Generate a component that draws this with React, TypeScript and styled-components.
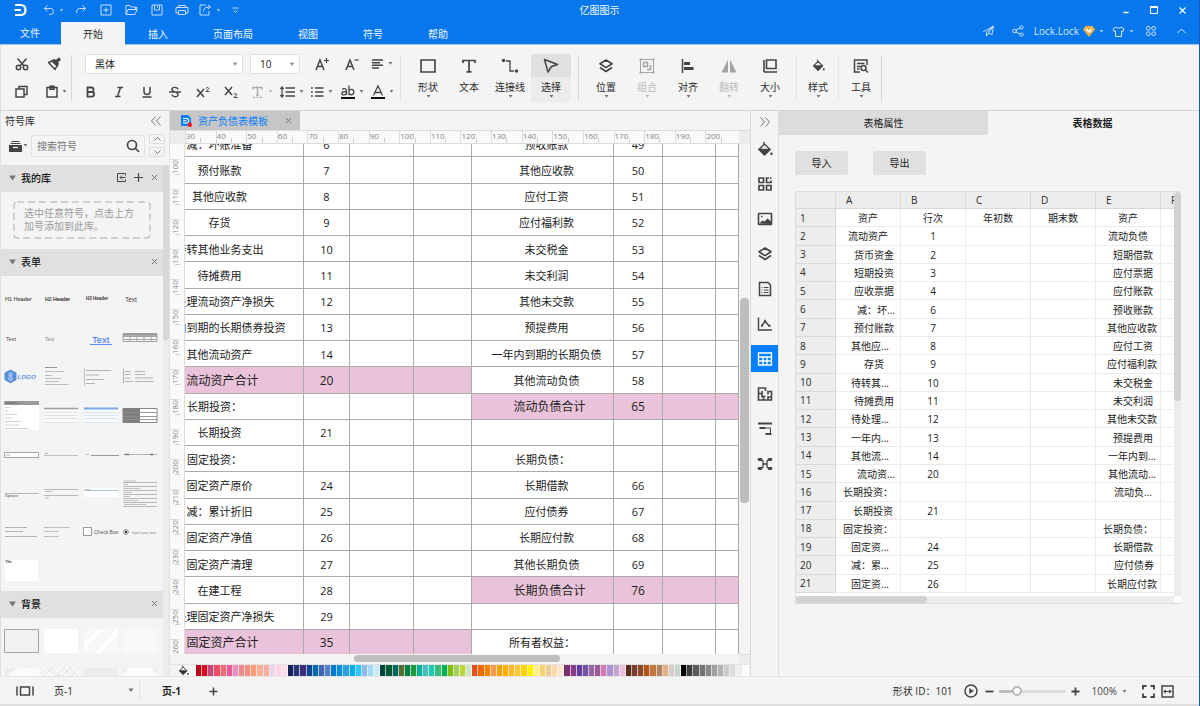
import React from 'react';
import styled, { createGlobalStyle, css } from 'styled-components';

const Global = createGlobalStyle`
  *, *::before, *::after { box-sizing: border-box; }
  html, body { margin: 0; padding: 0; }
  body, button, input, select, table {
    font-family: "Open Sans", "Noto Sans CJK SC", sans-serif;
    font-size: 10px;
    line-height: 16px;
    color: #2b2b2b;
  }
  button {
    border: 0;
    padding: 0;
    background: none;
    display: flex;
    align-items: center;
    justify-content: center;
    flex: none;
  }
  svg { display: block; flex: none; }
`;

/* ---------- icon helper ---------- */

type IconProps = {
  w?: number;
  h?: number;
  box?: string;
  sw?: number;
  fill?: string;
  children: React.ReactNode;
};

const Icon = ({ w = 16, h = w, box, sw = 1.5, fill = 'none', children }: IconProps) => (
  <svg
    width={w}
    height={h}
    viewBox={box || `0 0 ${w} ${h}`}
    fill={fill}
    stroke="currentColor"
    strokeWidth={sw}
    aria-hidden="true"
  >
    {children}
  </svg>
);

const Caret = ({ size = 5 }: { size?: number }) => (
  <svg width={size} height={size === 5 ? 3 : 5} viewBox="0 0 6 4" fill="currentColor" opacity={0.75} aria-hidden="true">
    <path d="M.5 0h5L3 3.500z" />
  </svg>
);

const CloseX = () => (
  <Icon w={7} sw={1}>
    <path d="M1 1l5 5M6 1L1 6" stroke="#777" />
  </Icon>
);

/* ---------- frame ---------- */

const Frame = styled.div`
  height: 100vh;
  display: flex;
  flex-direction: column;
  background: #f4f4f4;
  border-right: 1px solid #1a5cb8;
  overflow: hidden;
`;

const Header = styled.header`
  flex: none;
  background: #0977ec;
  color: #d9eafd;
  border-bottom: 1px solid #a9c4e2;
`;

const TitleBar = styled.div`
  display: grid;
  grid-template-columns: 1fr auto 1fr;
  align-items: center;
  height: 22px;
  padding-bottom: 2px;
`;

const QuickTools = styled.div`
  display: flex;
  align-items: center;
  padding-left: 12px;
`;

const QuickButton = styled.button<{ $w?: number }>`
  width: ${(p) => p.$w || 25}px;
  height: 20px;
  gap: 4px;
  color: #c4defb;
`;

const AppTitle = styled.h1`
  margin: 0;
  font-size: 10px;
  font-weight: 400;
  color: #f2f8ff;
`;

const WindowButtons = styled.div`
  display: flex;
  justify-content: flex-end;
  padding-right: 3px;
`;

const WindowButton = styled.button`
  width: 28px;
  height: 18px;
  color: #ffffff;
`;

const MenuRow = styled.div`
  display: flex;
  justify-content: space-between;
  height: 22px;
`;

const MenuTabs = styled.nav`
  display: flex;
  gap: 1px;
`;

const MenuTab = styled.button<{ $active?: boolean; $file?: boolean }>`
  height: 23px;
  padding: ${(p) => (p.$file ? '0 20px 2px' : '0 22px')};
  color: ${(p) => (p.$active ? '#2b2b2b' : '#eef6ff')};
  background: ${(p) => (p.$active ? '#f4f4f4' : 'transparent')};
  border-radius: 1px 1px 0 0;
`;

const Account = styled.div`
  display: flex;
  align-items: center;
  padding: 0 5px 4px 0;
`;

const AccountButton = styled.button<{ $w?: number }>`
  width: ${(p) => (p.$w ? p.$w + 'px' : 'auto')};
  gap: 4px;
  color: #d4e7fd;
`;

/* ---------- ribbon ---------- */

const Ribbon = styled.div`
  flex: none;
  height: 65px;
  display: flex;
  align-items: center;
  border-left: 1px solid #e0e0e0;
  color: #444444;
`;

const Divider = styled.div<{ $soft?: boolean }>`
  width: 1px;
  height: 46px;
  flex: none;
  background: ${(p) => (p.$soft ? '#e4e4e4' : '#d6d6d6')};
`;

const ToolStack = styled.div<{ $pad: string }>`
  display: flex;
  flex-direction: column;
  gap: 6px;
  padding: ${(p) => p.$pad};
`;

const ToolRow = styled.div<{ $pad?: number }>`
  display: flex;
  align-items: center;
  height: 22px;
  padding-left: ${(p) => p.$pad || 0}px;
`;

const Tool = styled.button<{ $w: number; $muted?: boolean }>`
  width: ${(p) => p.$w}px;
  height: 22px;
  gap: 4px;
  color: ${(p) => (p.$muted ? '#a8a8a8' : '#444444')};
`;

const Spacer = styled.div<{ $w: number }>`
  width: ${(p) => p.$w}px;
  flex: none;
`;

const SelectBox = styled.label<{ $w: number }>`
  position: relative;
  display: flex;
  width: ${(p) => p.$w}px;
  height: 20px;
  border: 1px solid #e0e0e0;
  border-radius: 1px;
  background: #ffffff;
  color: #777777;
  > svg {
    position: absolute;
    right: 4px;
    top: 7px;
    pointer-events: none;
  }
`;

const Select = styled.select`
  appearance: none;
  width: 100%;
  border: 0;
  padding: 0 9px;
  background: none;
  color: #222222;
`;

const BigGroup = styled.div<{ $pad: string }>`
  display: flex;
  gap: 1px;
  padding: ${(p) => p.$pad};
`;

const BigButton = styled.button<{ $active?: boolean; $muted?: boolean }>`
  width: 40px;
  height: 48px;
  flex-direction: column;
  justify-content: flex-start;
  color: ${(p) => (p.$muted ? '#a4a4a4' : '#444444')};
  ${(p) =>
    p.$active &&
    css`
      border-radius: 2px;
      background: linear-gradient(#e0e0e0 23px, #ececec 23px);
    `}
`;

const BigIcon = styled.span`
  display: flex;
  align-items: center;
  height: 24px;
`;

const BigLabel = styled.span<{ $muted?: boolean }>`
  height: 17px;
  line-height: 19px;
  color: ${(p) => (p.$muted ? '#bdbdbd' : '#2b2b2b')};
`;

/* ---------- body ---------- */

const Body = styled.main`
  flex: 1;
  min-height: 0;
  display: flex;
  border-top: 1px solid #d4d4d4;
`;

const Library = styled.aside`
  flex: none;
  width: 170px;
  display: flex;
  flex-direction: column;
  border-left: 1px solid #e0e0e0;
  border-right: 1px solid #e0e0e0;
  overflow: hidden;
`;

const LibraryHead = styled.div`
  flex: none;
  display: flex;
  align-items: center;
  justify-content: space-between;
  height: 20px;
  padding: 0 7px 0 4px;
`;

const LibraryTitle = styled.h2`
  margin: 0;
  font-size: 10px;
  font-weight: 400;
`;

const SearchRow = styled.div`
  flex: none;
  display: flex;
  align-items: center;
  height: 34px;
  padding: 3px 4px 8px 8px;
  color: #444444;
`;

const SearchBox = styled.label`
  flex: 1;
  min-width: 0;
  display: flex;
  align-items: center;
  height: 22px;
  margin: 0 4px 0 3px;
  padding-right: 4px;
  border: 1px solid #e2e2e2;
  border-radius: 2px;
`;

const SearchInput = styled.input`
  flex: 1;
  min-width: 0;
  border: 0;
  padding: 0 5px;
  background: none;
  &::placeholder { color: #777777; opacity: 1; }
`;

const Steppers = styled.div`
  display: flex;
  flex-direction: column;
  gap: 3px;
`;

const Stepper = styled.button`
  width: 16px;
  height: 10px;
  border: 1px solid #dcdcdc;
  border-radius: 2px;
  color: #777777;
`;

const LibraryScroll = styled.div`
  flex: 1;
  min-height: 0;
  display: grid;
  grid-template-columns: 1fr 6px;
`;

const LibraryList = styled.div`
  min-height: 0;
  overflow: hidden;
`;

const SectionHead = styled.div`
  display: flex;
  align-items: center;
  height: 27px;
  padding: 0 5px 2px 8px;
  gap: 5px;
  background: #e0e0e0;
  color: #777777;
`;

const SectionTitle = styled.h3`
  flex: 1;
  margin: 0;
  font-size: 10px;
  font-weight: 500;
  color: #111111;
`;

const SectionTools = styled.div`
  display: flex;
  gap: 8px;
  align-items: center;
  color: #444444;
`;

const EmptyHint = styled.p`
  display: flex;
  align-items: center;
  position: relative;
  height: 38px;
  margin: 9px 12px 10px;
  padding: 0 10px 0 11px;
  line-height: 13px;
  color: #9b9b9b;
  > svg { position: absolute; inset: 0; width: 100%; height: 100%; }
`;

const Thumbs = styled.div`
  display: grid;
  grid-template-columns: repeat(4, 1fr);
  grid-auto-rows: 39px;
  justify-items: center;
  padding: 3px 3px 0 1px;
`;

const Track = styled.div`
  background: #ececec;
`;

const Thumb = styled.div<{ $len: number; $offset?: number; $wide?: boolean; $tone?: string }>`
  border-radius: 4px;
  background: ${(p) => p.$tone || '#bdbdbd'};
  ${(p) =>
    p.$wide
      ? css`
          width: ${p.$len}px;
          height: 100%;
          margin-left: ${p.$offset || 0}px;
        `
      : css`
          height: ${p.$len}px;
          width: 100%;
          margin-top: ${p.$offset || 0}px;
        `}
`;

/* ---------- workspace ---------- */

const Workspace = styled.section`
  flex: 1;
  min-width: 0;
  display: flex;
  flex-direction: column;
`;

const DocTabs = styled.div`
  flex: none;
  display: flex;
  height: 19px;
`;

const DocTab = styled.div`
  display: flex;
  align-items: center;
  width: 130px;
  padding: 0 8px 0 10px;
  gap: 6px;
  background: #c6c6c6;
  color: #777777;
`;

const DocName = styled.span`
  flex: 1;
  color: #0a80f8;
`;

const Stage = styled.div`
  flex: 1;
  min-height: 0;
  display: grid;
  grid-template-columns: 15px minmax(0, 1fr) 11px;
  grid-template-rows: 14px minmax(0, 1fr) 10px;
`;

const Corner = styled.div`
  background: #ececec;
  border-top: 1px solid #dcdcdc;
`;

const RulerX = styled.div`
  display: grid;
  grid-auto-flow: column;
  grid-auto-columns: 1fr;
  padding-right: 3px;
  background: #fafafa;
  border-top: 1px solid #dcdcdc;
  border-bottom: 1px solid #dcdcdc;
  overflow: hidden;
`;

const MarkX = styled.span`
  border-left: 1px solid #dcdcdc;
  font-size: 8px;
  line-height: 10px;
  color: #858585;
  background: linear-gradient(#cfcfcf, #cfcfcf) 50% 100% / 1px 5px no-repeat;
`;

const RulerY = styled.div`
  background: #fafafa;
  border-right: 1px solid #dcdcdc;
  padding-top: 15px;
  overflow: hidden;
`;

const MarkY = styled.span`
  display: flex;
  align-items: center;
  height: 30px;
  writing-mode: vertical-rl;
  transform: rotate(180deg);
  justify-content: flex-end;
  border-bottom: 1px solid #dcdcdc;
  font-size: 8px;
  line-height: 10px;
  color: #858585;
  background: linear-gradient(#cfcfcf, #cfcfcf) 0 50% / 5px 1px no-repeat;
`;

const Page = styled.div`
  background: #ffffff;
  overflow: hidden;
`;

const Sheet = styled.table`
  table-layout: fixed;
  width: calc(100% + 49px);
  height: 525px;
  margin: -13px 0 0 -49px;
  border-collapse: separate;
  border-spacing: 0;
`;

const Cell = styled.td<{ $pink?: boolean; $big?: boolean; $left?: number; $indent?: number }>`
  padding: ${(p) => `2px 0 0 ${p.$left || p.$indent || 0}px`};
  border-right: 1px solid #ababab;
  border-bottom: 1px solid #ababab;
  background: ${(p) => (p.$pink ? '#eac2da' : '#ffffff')};
  color: #222222;
  font-size: ${(p) => (p.$big ? 12 : 11)}px;
  text-align: ${(p) => (p.$left ? 'left' : 'center')};
  white-space: nowrap;
`;

const TrackY = styled.div`
  background: #f4f4f4;
  padding: 0 1px;
`;

const TrackX = styled.div`
  grid-column: 1 / 3;
  background: #f4f4f4;
  padding: 1px 0 2px;
`;

const PaletteRow = styled.div`
  flex: none;
  display: flex;
  align-items: center;
  height: 12px;
  padding: 0 2px 0 8px;
  border-top: 1px solid #e4e4e4;
  color: #333333;
`;

const Swatches = styled.div`
  flex: 1;
  display: flex;
  height: 11px;
  margin-left: 7px;
`;

const Swatch = styled.span`
  flex: 1;
  border-right: 1px solid rgba(255, 255, 255, 0.65);
`;

/* ---------- side rail ---------- */

const Rail = styled.nav`
  flex: none;
  width: 29px;
  display: flex;
  flex-direction: column;
  gap: 8px;
  border-left: 1px solid #dadada;
  border-right: 1px solid #dedede;
`;

const RailToggle = styled.button`
  height: 16px;
  padding-top: 6px;
  color: #777777;
`;

const RailButton = styled.button<{ $active?: boolean }>`
  height: 27px;
  color: ${(p) => (p.$active ? '#ffffff' : '#444444')};
  background: ${(p) => (p.$active ? '#0080ff' : 'transparent')};
`;

/* ---------- data panel ---------- */

const DataPanel = styled.aside`
  flex: none;
  width: 420px;
  display: flex;
  flex-direction: column;
`;

const PanelTabs = styled.div`
  display: flex;
  padding-right: 2px;
`;

const PanelTab = styled.button<{ $active?: boolean }>`
  flex: 1;
  height: 24px;
  border-radius: 0 0 3px 0;
  background: ${(p) => (p.$active ? 'transparent' : '#dcdcdc')};
  font-weight: ${(p) => (p.$active ? 700 : 400)};
  color: #1c1c1c;
`;

const PanelActions = styled.div`
  display: flex;
  gap: 25px;
  padding: 16px;
`;

const ActionButton = styled.button`
  width: 53px;
  height: 24px;
  border-radius: 2px;
  background: #e0e0e0;
  color: #1c1c1c;
`;

const GridBox = styled.div`
  display: grid;
  grid-template-columns: minmax(0, 1fr) 7px;
  margin: 0 18px 0 16px;
  border: 1px solid #dcdcdc;
  border-right: 0;
  background: #ffffff;
`;

const GridView = styled.div`
  overflow: hidden;
  height: 404px;
`;

const DataGrid = styled.table`
  table-layout: fixed;
  width: 430px;
  height: 401px;
  border-collapse: separate;
  border-spacing: 0;
`;

const ColHead = styled.th`
  padding: 0 0 0 10px;
  background: #ededed;
  border-right: 1px solid #d9d9d9;
  border-bottom: 1px solid #d9d9d9;
  font-weight: 400;
  text-align: left;
`;

const RowHead = styled.th`
  padding: 0 0 0 4px;
  background: #ededed;
  border-right: 1px solid #d9d9d9;
  border-bottom: 1px solid #d9d9d9;
  font-weight: 400;
  text-align: left;
`;

const DataCell = styled.td<{ $indent?: number; $left?: boolean }>`
  padding: 1px 0 0 ${(p) => (p.$left ? 7 : p.$indent || 0)}px;
  border-right: 1px solid #ebebeb;
  border-bottom: 1px solid #ebebeb;
  text-align: ${(p) => (p.$left ? 'left' : 'center')};
  white-space: nowrap;
  color: #1c1c1c;
`;

const GridTrackX = styled.div`
  height: 7px;
  background: #ececec;
`;

/* ---------- status bar ---------- */

const Status = styled.footer`
  flex: none;
  display: flex;
  align-items: center;
  justify-content: space-between;
  height: 30px;
  padding: 0 25px 1px 16px;
  border-top: 1px solid #e4e4e4;
  box-shadow: inset 0 -2px #dedede;
  color: #444444;
`;

const StatusGroup = styled.div`
  display: flex;
  align-items: center;
`;

const PageSelect = styled.label`
  position: relative;
  display: flex;
  align-items: center;
  width: 106px;
  height: 18px;
  border-right: 1px solid #e0e0e0;
  > svg { position: absolute; right: 5px; top: 6px; pointer-events: none; }
`;

const PageTab = styled.button`
  width: 63px;
  font-weight: 700;
  color: #222222;
`;

const ShapeId = styled.span`
  color: #2b2b2b;
  margin-right: 11px;
`;

const Zoom = styled.input`
  appearance: none;
  width: 67px;
  height: 10px;
  margin: 0 4px 0 3px;
  background: linear-gradient(90deg, #bdbdbd 18px, #dedede 18px) 0 50% / 100% 3px no-repeat;
  &::-webkit-slider-thumb {
    appearance: none;
    width: 10px;
    height: 10px;
    border: 2px solid #b8b8b8;
    border-radius: 50%;
    background: #ffffff;
  }
`;

const ZoomValue = styled.button`
  gap: 5px;
  margin: 0 14px 0 10px;
  color: #444444;
`;

const StatusButton = styled.button<{ $w?: number }>`
  width: ${(p) => p.$w || 14}px;
  height: 16px;
  color: #444444;
`;

/* ---------- data ---------- */

type SheetRow = {
  a?: string;
  an?: string;
  e?: string;
  en?: string;
  aSum?: boolean;
  eSum?: boolean;
  aLeft?: boolean;
  eLeft?: number;
};

const sheetRows: SheetRow[] = [
  { a: '减：坏账准备', an: '6', e: '预收账款', en: '49' },
  { a: '预付账款', an: '7', e: '其他应收款', en: '50' },
  { a: '其他应收款', an: '8', e: '应付工资', en: '51' },
  { a: '存货', an: '9', e: '应付福利款', en: '52' },
  { a: '待转其他业务支出', an: '10', e: '未交税金', en: '53' },
  { a: '待摊费用', an: '11', e: '未交利润', en: '54' },
  { a: '待处理流动资产净损失', an: '12', e: '其他未交款', en: '55' },
  { a: '一年内到期的长期债券投资', an: '13', e: '预提费用', en: '56' },
  { a: '其他流动资产', an: '14', e: '一年内到期的长期负债', en: '57' },
  { a: '流动资产合计', an: '20', aSum: true, e: '其他流动负债', en: '58' },
  { a: '长期投资：', aLeft: true, e: '流动负债合计', en: '65', eSum: true },
  { a: '长期投资', an: '21' },
  { a: '固定投资：', aLeft: true, e: '长期负债：', eLeft: 43 },
  { a: '固定资产原价', an: '24', e: '长期借款', en: '66' },
  { a: '减：累计折旧', an: '25', e: '应付债券', en: '67' },
  { a: '固定资产净值', an: '26', e: '长期应付款', en: '68' },
  { a: '固定资产清理', an: '27', e: '其他长期负债', en: '69' },
  { a: '在建工程', an: '28', e: '长期负债合计', en: '76', eSum: true },
  { a: '待处理固定资产净损失', an: '29' },
  { a: '固定资产合计', an: '35', aSum: true, e: '所有者权益：', eLeft: 37 },
];

type GridRow = [string, number, string, string, string, string, number];

/* text of A, indent of A, B, C, D, text of E, indent of E; indent -1 keeps the cell left-aligned */
const gridRows: GridRow[] = [
  ['资产', 0, '行次', '年初数', '期末数', '资产', 0],
  ['流动资产', 0, '1', '', '', '流动负债', 0],
  ['货币资金', 12, '2', '', '', '短期借款', 10],
  ['短期投资', 12, '3', '', '', '应付票据', 10],
  ['应收票据', 12, '4', '', '', '应付账款', 10],
  ['减：坏...', 16, '6', '', '', '预收账款', 10],
  ['预付账款', 12, '7', '', '', '其他应收款', 8],
  ['其他应...', 4, '8', '', '', '应付工资', 10],
  ['存货', 12, '9', '', '', '应付福利款', 8],
  ['待转其...', 4, '10', '', '', '未交税金', 10],
  ['待摊费用', 12, '11', '', '', '未交利润', 10],
  ['待处理...', 4, '12', '', '', '其他未交款', 8],
  ['一年内...', 4, '13', '', '', '预提费用', 10],
  ['其他流...', 4, '14', '', '', '一年内到...', 8],
  ['流动资...', 16, '20', '', '', '其他流动...', 8],
  ['长期投资：', -1, '', '', '', '流动负...', 10],
  ['长期投资', 10, '21', '', '', '', 0],
  ['固定投资：', -1, '', '', '', '长期负债：', -1],
  ['固定资...', 4, '24', '', '', '长期借款', 10],
  ['减：累...', 4, '25', '', '', '应付债券', 12],
  ['固定资...', 4, '26', '', '', '长期应付款', 8],
];

const swatches = (
  '#b60818 #dc0822 #c4497c #f04d63 #ee6b75 #e95a9c #e293bd #f08a8a #f08f80 #ff9b7a #f6b196 #f2b1a4 #ead6e8 #ffd4e4 #ffdfe6 ' +
  '#14235a #233670 #3e2a7c #0b4690 #0067a8 #3f66b0 #5580c4 #007ccc #0a8cd8 #2aa2e0 #00aeef #33c2fa #8cbcea #a2d8f2 #cfe9f5 ' +
  '#00443a #005a34 #006460 #55702e #008046 #1b9a3e #00b09a #4cbcc0 #18ccb0 #40b97c #00b050 #84bc10 #a4d060 #bcd63c #cde6c6 ' +
  '#e4501e #f06a00 #f28400 #f49a50 #f0a400 #fdb000 #fdb833 #fcc832 #ffd400 #fff000 #fdf08c #fcd06e #eccd96 #fdd9ac #fde6cc ' +
  '#7a2f72 #843f88 #6340a0 #7452a4 #9566a0 #9e5c92 #d07cb4 #ac94d4 #c6a6cc #eac0dc ' +
  '#5e2a1c #783e30 #8e4a28 #b2541c #c07840 #b48464 #deb284 #d6ccc8 #c8d4cc ' +
  '#000000 #3e3a39 #5a5a5a #727272 #888888 #a0a0a0 #b4b4b4 #cccccc #dcdcdc #eeeeee #ffffff'
).split(' ');

const steps = (from: number, count: number) => Array.from({ length: count }, (_, i) => from + i * 10);

/* ---------- library thumbnails ---------- */

const Art = ({ children }: { children?: React.ReactNode }) => (
  <svg width="36" height="39" viewBox="0 0 36 39" fontFamily="Liberation Sans, sans-serif" aria-hidden="true">
    {children}
  </svg>
);

/* greeked text: one dashed stroke for each [x, y, width] */
const Greek = ({ rows, tone = '#a6a6a6', t = 1 }: { rows: number[][]; tone?: string; t?: number }) => (
  <g stroke={tone} strokeWidth={t} strokeDasharray="5 .3 3 .3" opacity=".75">
    {rows.map(([x, y, w], i) => (
      <path key={i} d={`M${x} ${y}h${w}`} />
    ))}
  </g>
);

const Rules = ({ ys, tone = '#b8b8b8', x = 1, w = 34 }: { ys: number[]; tone?: string; x?: number; w?: number }) => (
  <g stroke={tone} strokeWidth="1">
    {ys.map((y) => (
      <path key={y} d={`M${x} ${y}h${w}`} />
    ))}
  </g>
);

const formThumbs: React.ReactNode[] = [
  <text x="1" y="21.5" fontSize="5.5" fill="#444" stroke="#444" strokeWidth=".1">H1 Header</text>,
  <text x="2" y="22" fontSize="5.2" fill="#444" stroke="#444" strokeWidth=".2">H2 Header</text>,
  <text x="3" y="21" fontSize="4.5" fontWeight="700" fill="#333">H3 Header</text>,
  <text x="3" y="22.5" fontSize="6.5" fill="#444">Text</text>,

  <text x="2" y="22.500" fontSize="5.5" fill="#444">Text</text>,
  <text x="2" y="22.500" fontSize="5" fill="#888">Text</text>,
  <g>
    <text x="9" y="24.500" fontSize="9.500" fill="#2f6cf0">Text</text>
    <path d="M7 26.5h22" stroke="#5c8cf2" />
  </g>,
  <g>
    <path d="M1 15.5h34v8H1zM1 18.5h34M1 21.5h34M8 15v8M15 15v8M22 15v8M29 15v8" fill="#f8f8f8" stroke="#a4a4a4" />
    <path d="M1 16.5h34" stroke="#9a9a9a" strokeWidth="2.500" />
  </g>,

  <g>
    <path d="M6.500 12.500l6 3.200v7.200l-6 3.300-6-3.300v-7.200z" fill="#5a8fdb" />
    <circle cx="6.5" cy="17.500" r="1.500" stroke="#fff" fill="none" strokeWidth=".8" />
    <circle cx="6.500" cy="21.500" r="1.700" stroke="#fff" fill="none" strokeWidth=".8" />
    <text x="13.500" y="21.500" fontSize="6.2" fontWeight="700" fontStyle="italic" fill="#5a8fdb">LOGO</text>
  </g>,
  <g>
    <Greek rows={[[2, 10.5, 12]]} tone="#6c6c6c" />
    <Greek rows={[[2, 14.5, 19], [2, 18.5, 7], [2, 21.5, 16], [2, 24.5, 14], [2, 27.5, 24]]} />
  </g>,
  <g>
    <path d="M1.5 11v18" stroke="#aaa" strokeWidth=".7" />
    <Greek rows={[[3, 13.5, 25], [3, 18, 13], [3, 22.5, 18], [3, 26.5, 9]]} tone="#9a9a9a" />
  </g>,
  <g>
    <path d="M1.5 12v14" stroke="#888" strokeWidth=".7" />
    <Greek rows={[[3, 14.5, 6], [13, 14.5, 10], [3, 17.5, 5], [13, 17.5, 10], [3, 21, 6], [13, 21, 18], [3, 24.5, 8], [13, 24.5, 19]]} tone="#9a9a9a" />
  </g>,

  <g>
    <path d="M0 5h35v29H0z" fill="#fff" />
    <path d="M0 5h35v4H0z" fill="#9a9a9a" />
    <path d="M2 7h11" stroke="#666" />
    <Greek rows={[[1, 11.5, 5], [1, 15, 3], [1, 18.5, 12], [1, 22, 7], [1, 25.5, 16], [1, 29, 14], [1, 32.5, 24]]} tone="#c2c2c2" />
  </g>,
  <g>
    <path d="M1 12h34v15H1z" fill="#fbfbfb" />
    <Greek rows={[[1, 12.5, 34]]} tone="#7c7c7c" t={1.5} />
    <Rules ys={[16.5, 19.5, 22.5, 26.5]} tone="#e2e2e2" />
  </g>,
  <g>
    <path d="M1 12h34v15H1z" fill="#fbfbfb" />
    <Greek rows={[[1, 12.5, 34]]} tone="#4a86e0" t={1.8} />
    <Rules ys={[16.5, 19.5, 22.5, 26.5]} tone="#d4e6f8" />
  </g>,
  <g>
    <path d="M1 12.5h34v14H1z" fill="#fff" stroke="#888" />
    <path d="M1 12.5h17v14H1z" fill="#7e7e7e" />
    <path d="M18 16.5h17M18 20.5h17M18 23.5h17" stroke="#999" />
    <path d="M1 16.5h17M1 20.5h17M1 23.5h17" stroke="#999" strokeWidth=".6" />
  </g>,

  <g>
    <path d="M.5 17.5h34v5H.5z" fill="#fff" stroke="#a4a4a4" />
    <Greek rows={[[2, 20, 4]]} tone="#999" />
  </g>,
  <g><Greek rows={[[2, 18.5, 3]]} /><Rules ys={[20.5]} tone="#c0c0c0" /></g>,
  <g><Greek rows={[[3, 19.5, 3]]} /><Rules ys={[20.5]} tone="#999" x={8} w={28} /></g>,
  <g><Rules ys={[19.5]} tone="#b4b4b4" /><Greek rows={[[3, 19.5, 4], [28, 19.5, 3]]} tone="#666" t={1.5} /></g>,

  <g>
    <Rules ys={[19.5]} />
    <text x="1" y="23" fontSize="3" fill="#444">Signature</text>
  </g>,
  <g><Rules ys={[15.5, 21.5]} /><Greek rows={[[2, 17.5, 7], [2, 24, 4]]} /></g>,
  <g>
    <path d="M1 14h34v9H1z" fill="#fff" />
    <path d="M1 16.5h34" stroke="#a9c6d0" />
    <Greek rows={[[2, 15.5, 5]]} />
  </g>,
  <g>
    <Rules ys={[8.5, 12.5, 16.5, 20.5, 24.5, 28.5, 32.5]} />
    <Greek rows={[[2, 7, 12], [2, 10.5, 4], [2, 14.5, 16], [2, 18.5, 8], [2, 22.5, 6], [2, 26.5, 14], [2, 30.5, 22]]} tone="#999" t={0.8} />
  </g>,

  <Greek rows={[[1, 14.500, 22], [1, 18.500, 18], [1, 23.5, 32]]} tone="#999" />,
  <Greek rows={[[1, 14.500, 26], [1, 18.500, 15], [1, 23.5, 15]]} tone="#a8a8a8" />,
  <g>
    <path d="M.5 14.5h8v8h-8z" fill="#fff" stroke="#999" />
    <text x="11" y="21" fontSize="5" fill="#555">Check Box</text>
  </g>,
  <g>
    <circle cx="4" cy="19" r="2.4" fill="none" stroke="#777" strokeWidth=".8" />
    <circle cx="4" cy="19" r="1.2" fill="#333" />
    <text x="10" y="20.5" fontSize="3.8" fill="#888">Input your text</text>
  </g>,

  <g>
    <path d="M1 8h33v21H1z" fill="#fff" />
    <text x="1.5" y="11" fontSize="3" fontWeight="700" fill="#333">Title</text>
  </g>,
];

const backgroundThumbs: React.ReactNode[] = [
  <path d="M.5 8.5h34v23H.5z" fill="#f2f2f2" stroke="#a4a4a4" />,
  <path d="M1 8h34v24H1z" fill="#fff" />,
  <g>
    <path d="M1 8h34v24H1z" fill="#f8f8f8" />
    <path d="M1 23L16 8h6L1 29zM12 32L34 8h1v6L18 32z" fill="#fff" />
  </g>,
  <path d="M1 8h34v24H1z" fill="#f8f8f8" />,
  <g><path d="M1 8h34v24H1z" fill="#fbfbfb" /><path d="M1 8h12L1 19z" fill="#ececec" /></g>,
  <g>
    <path d="M1 8h34v24H1z" fill="#f8f8f8" />
    <path d="M1 12l4-4 8 8 8-8 8 8 6-8M1 16l8-8 9 9 9-9 8 9" fill="none" stroke="#e2e2e2" />
  </g>,
  <path d="M1 8h34v24H1z" fill="#ededed" />,
  <g><path d="M1 8h34v24H1z" fill="#fcfcfc" /><path d="M1 8h5l-5 7zM35 8h-5l5 7z" fill="#ececec" /></g>,
];

/* ---------- icons ---------- */

const Bucket = ({ size }: { size: number }) => (
  <Icon w={size} box="0 0 16 16" sw={1.4}>
    <path d="M6.5 1l1 2L2 8.500 7.500 14 13 8.500 7.500 3" strokeLinejoin="round" />
    <path d="M2.500 8.500h10l-5 5z" fill="currentColor" />
    <path d="M14.500 11.500v2.500" strokeWidth="2" />
  </Icon>
);

const layers = (
  <Icon w={16} sw={1.6}>
    <path d="M8 2l6 3.800-6 3.800-6-3.800zM2 9.500l6 4 6-4" strokeLinejoin="round" />
  </Icon>
);

const railIcons: [string, React.ReactNode][] = [
  ['填充', <Bucket size={16} />],
  ['符号', (
    <Icon w={16} sw={1.7}>
      <path d="M2 2h4.500v4.500H2zM2 9.500h4.500V14H2zM9.500 9.500H14V14H9.500zM12 2H9.500v4.500H14V4.500" />
      <path d="M13 2.200h1.500" />
    </Icon>
  )],
  ['图片', (
    <Icon w={16} sw={1.6}>
      <rect x="1.500" y="2.500" width="13" height="11" rx=".5" />
      <path d="M2 12.500l3.500-3 2 1 3-3 3.500 3v2.500z" fill="currentColor" stroke="none" />
      <path d="M4 5.500h1.500" />
    </Icon>
  )],
  ['图层', layers],
  ['备注', (
    <Icon w={16} sw={1.5}>
      <path d="M2.500 1.500h8.500l2.500 2.500v10.500h-11z" />
      <path d="M4.500 6.500h1M7 6.500h4.500M4.500 9h1M7 9h4.500M4.500 11.500h1M7 11.500h4.500" strokeWidth="1.200" />
    </Icon>
  )],
  ['图表', (
    <Icon w={16} sw={1.4}>
      <path d="M1.500 1.500v12.500H15M4.500 10.500L8 5l4.500 5.500" />
      <path d="M4 9.500h1.500M7.200 4.800h1.600M12 9.800h1.500M7.200 5.500h1.600" strokeWidth="2" />
    </Icon>
  )],
  ['表格', (
    <Icon w={16} sw={1.4}>
      <path d="M1.500 2h13v12h-13zM1.500 6h13M1.500 10h13M6 6v8M10 6v8" />
    </Icon>
  )],
  ['平面图', (
    <Icon w={16} sw={1.6}>
      <path d="M8.500 5V2h-7v12h13V5.500H11v3M1.500 7.500H5M5 5v5.500h3.500M6.500 14v-3M11 14v-3h3.500" />
    </Icon>
  )],
  ['甘特图', (
    <Icon w={16} sw={2}>
      <path d="M1 2.500h14M2.500 7h6M8.500 13h6" />
      <path d="M8.500 7h5v6" strokeWidth="1" />
    </Icon>
  )],
  ['关系图', (
    <Icon w={16} sw={1.3}>
      <path d="M3 3.500l3 1.500v6L3 12.500M13 3.500L10 5v6l3 1.500M6 8h4" />
      <path d="M2 3.500h2M2 12.500h2M12 3.500h2M12 12.500h2" strokeWidth="2.800" strokeLinecap="round" />
    </Icon>
  )],
];

/* ---------- sections ---------- */

const TopBar = () => (
  <Header>
    <TitleBar>
      <QuickTools>
        <Icon w={16} h={14} sw={2.2}>
          <path d="M3 2h5.500c3.500 0 5 2.300 5 5s-1.500 5-5 5H3M2.500 7H9" stroke="#fff" />
        </Icon>
        <Spacer $w={9} />
        <QuickButton $w={32} aria-label="撤销">
          <Icon w={12} sw={1}><path d="M4.500 1.500l-3 3 3 3M1.500 4.500h6a3 3 0 0 1 0 6H6" /></Icon>
          <Caret />
        </QuickButton>
        <QuickButton $w={24} aria-label="重做">
          <Icon w={12} sw={1}><path d="M7.500 1.500l3 3-3 3M10.500 4.500h-6a3 3 0 0 0-2.500 4.500" /></Icon>
        </QuickButton>
        <QuickButton $w={25} aria-label="新建">
          <Icon w={12} sw={1}><path d="M1 1h10v10H1zM6 3.500v5M3.500 6h5" /></Icon>
        </QuickButton>
        <QuickButton $w={26} aria-label="打开">
          <Icon w={13} h={12} sw={1}><path d="M1 10.500V1.500h4l1 1.500h4.500v2.500M1 10.500l2-5h9l-2 5zM12 5.500v-2h-2" /></Icon>
        </QuickButton>
        <QuickButton $w={25} aria-label="保存">
          <Icon w={12} sw={1}><path d="M1 1h10v10H1zM3.500 1v5h5V1M6.500 2.500v1.500" /></Icon>
        </QuickButton>
        <QuickButton $w={25} aria-label="打印">
          <Icon w={14} h={12} sw={1}><path d="M3.500 3.500v-2h7v2M3.500 9H1V3.500h12V9h-2.500M3.500 6.500h7v4h-7z" /></Icon>
        </QuickButton>
        <QuickButton $w={31} aria-label="导出">
          <Icon w={13} h={12} sw={1}><path d="M7 1H1v10h9V7M4.500 7.500c0-3 2-4.500 6.500-4.500M9 1l2.500 2L9 5" /></Icon>
          <Caret />
        </QuickButton>
        <QuickButton $w={21} aria-label="自定义快速访问">
          <Icon w={7} h={7} sw={1}><path d="M.5 1h6M1.500 3.500l2 2 2-2" /></Icon>
        </QuickButton>
      </QuickTools>
      <AppTitle>亿图图示</AppTitle>
      <WindowButtons>
        <WindowButton aria-label="最小化"><Icon w={8} sw={1.5}><path d="M1.500 6.500h5" /></Icon></WindowButton>
        <WindowButton aria-label="最大化"><Icon w={8} sw={1}><path d="M.5 .5h7v7h-7zM.5 1.500h7" /></Icon></WindowButton>
        <WindowButton aria-label="关闭"><Icon w={7} sw={1.1}><path d="M.5 .5l6 6M6.500 .5l-6 6" /></Icon></WindowButton>
      </WindowButtons>
    </TitleBar>
    <MenuRow>
      <MenuTabs>
        <MenuTab $file>文件</MenuTab>
        <MenuTab $active>开始</MenuTab>
        <MenuTab>插入</MenuTab>
        <MenuTab>页面布局</MenuTab>
        <MenuTab>视图</MenuTab>
        <MenuTab>符号</MenuTab>
        <MenuTab>帮助</MenuTab>
      </MenuTabs>
      <Account>
        <AccountButton $w={29} aria-label="发送">
          <Icon w={12} sw={0.9}><path d="M1 7L11.500 1 10 9.500 6.500 8 11 1.500 4.500 7.500V11L6.500 8" /></Icon>
        </AccountButton>
        <AccountButton $w={31} aria-label="分享">
          <Icon w={12} sw={1}><circle cx="2.500" cy="6" r="1.800" /><circle cx="9.500" cy="2.500" r="1.600" /><circle cx="9.500" cy="9.500" r="1.600" /><path d="M4 5l4-2M4 7l4 2" /></Icon>
        </AccountButton>
        <AccountButton>
          Lock.Lock
          <svg width="12" height="11" viewBox="0 0 12 11" aria-hidden="true">
            <path d="M2.500 0h7L12 3.500 6 11 0 3.500z" fill="#f2b04e" />
            <path d="M3.300 3L6 6l2.700-3" fill="none" stroke="#fff" strokeWidth="1.500" />
          </svg>
          <Caret />
        </AccountButton>
        <Spacer $w={8} />
        <AccountButton aria-label="主题">
          <Icon w={13} h={11} sw={1}><path d="M4 1L1 3l1 2.500L3.500 5v5.500h6V5l1.500.500L12 3 9 1c-.500 1.500-4.500 1.500-5 0z" /></Icon>
          <Caret />
        </AccountButton>
        <AccountButton $w={34} aria-label="应用">
          <Icon w={12} sw={1}><circle cx="3.300" cy="3.300" r="1.900" /><circle cx="8.700" cy="3.300" r="1.900" /><circle cx="3.300" cy="8.700" r="1.900" /><circle cx="8.700" cy="8.700" r="1.900" /></Icon>
        </AccountButton>
        <AccountButton $w={26} aria-label="收起功能区">
          <Icon w={9} h={6} sw={1}><path d="M.5 5l4-4 4 4" /></Icon>
        </AccountButton>
      </Account>
    </MenuRow>
  </Header>
);

type Big = { label: string; icon: React.ReactNode; active?: boolean; muted?: boolean; noCaret?: boolean };

const insertTools: Big[] = [
  { label: '形状', icon: <Icon w={16} sw={1.6}><path d="M1 2h14v12H1z" /></Icon> },
  { label: '文本', icon: <Icon w={16} sw={1.7}><path d="M2 5V2.500h12V5M8 2.500v11M5.500 13.800h5" /></Icon>, noCaret: true },
  { label: '连接线', icon: <Icon w={18} h={16} sw={1.3}><path d="M5 3h4v10h4" /><circle cx="2.500" cy="2.500" r="1.700" fill="currentColor" stroke="none" /><circle cx="15.500" cy="13" r="1.700" fill="currentColor" stroke="none" /></Icon> },
  { label: '选择', icon: <Icon w={16} sw={1.5}><path d="M1.500 1.500l13 5-6 2-3.500 5.500z" strokeLinejoin="round" /></Icon>, active: true },
];

const arrangeTools: Big[] = [
  { label: '位置', icon: layers },
  { label: '组合', icon: <Icon w={16} sw={1}><path d="M1.500 1.500h13v13h-13z" /><path d="M4.500 4.500h4v4h-4zM8 11.500h3.500V7" strokeWidth="1.500" /><path d="M.5 1.500h2M13.500 1.500h2M.5 14.500h2M13.500 14.500h2" strokeWidth="2" /></Icon>, muted: true },
  { label: '对齐', icon: <Icon w={16} sw={1.5}><path d="M2.500 1v14" /><path d="M4 5.500h6M4 10.500h9.500" strokeWidth="3" /></Icon> },
  { label: '翻转', icon: <Icon w={16} fill="currentColor" sw={0}><path d="M7 1.500v13H.5zM9 1.500v13h6.500z" /></Icon>, muted: true },
  { label: '大小', icon: <Icon w={16} sw={1.6}><path d="M2 2v12M4.500 2h9.500v8.500H4.500zM2 14h13" /></Icon> },
];

const BigTool = ({ label, icon, active, muted, noCaret }: Big) => (
  <BigButton $active={active} $muted={muted} disabled={muted}>
    <BigIcon>{icon}</BigIcon>
    <BigLabel $muted={muted}>{label}</BigLabel>
    {!noCaret && <Caret />}
  </BigButton>
);

const RibbonBar = () => (
  <Ribbon>
    <ToolStack $pad="0 0 0 6px">
      <ToolRow>
        <Tool $w={29} aria-label="剪切">
          <Icon w={14} sw={1.5}><circle cx="3.500" cy="10.500" r="2.200" /><circle cx="10.500" cy="10.500" r="2.200" /><path d="M2.500 1.500l6.500 7.500M11.500 1.500L5 9" /></Icon>
        </Tool>
        <Tool $w={35} aria-label="格式刷">
          <Icon w={14} sw={1.500}><path d="M1.500 5.500l6-2.500 3.500 3.500-3 6z" strokeLinejoin="round" /><path d="M5 4l2.500-1L11 7l-.800 2z" fill="currentColor" /><path d="M9.500 4.500L13 1.500" strokeWidth="3" /></Icon>
        </Tool>
      </ToolRow>
      <ToolRow>
        <Tool $w={29} aria-label="复制">
          <Icon w={13} sw={1.500}><path d="M1 4h8v8H1zM4 4V1.500h8v8H9" /></Icon>
        </Tool>
        <Tool $w={35} aria-label="粘贴">
          <Spacer $w={1} />
          <Icon w={12} h={13} sw={1.500}><path d="M1 2.500h10v9.500H1zM4 1.200h4v3H4z" /></Icon>
          <Caret />
        </Tool>
      </ToolRow>
    </ToolStack>
    <Divider />
    <ToolStack $pad="0 3px 0 5px">
      <ToolRow $pad={8}>
        <SelectBox $w={158}>
          <Select aria-label="字体"><option>黑体</option></Select>
          <Caret size={6} />
        </SelectBox>
        <Spacer $w={7} />
        <SelectBox $w={50}>
          <Select aria-label="字号"><option>10</option></Select>
          <Caret size={6} />
        </SelectBox>
        <Spacer $w={7} />
        <Tool $w={30} aria-label="增大字号">
          <Icon w={14} sw={1.500}><path d="M1 13L5 3l4 10M2.500 9.500h5" /><path d="M9 3.500h5M11.500 1v5" strokeWidth="1.200" /></Icon>
        </Tool>
        <Tool $w={30} aria-label="减小字号">
          <Icon w={14} sw={1.500}><path d="M1 13L5 3l4 10M2.500 9.500h5" /><path d="M9.500 3h4" strokeWidth="1.200" /></Icon>
        </Tool>
        <Tool $w={30} aria-label="段落对齐">
          <Icon w={12} h={10} sw={1.500}><path d="M0 1h11M0 3.700h8M0 6.300h11M0 9h7" /></Icon>
          <Caret />
        </Tool>
      </ToolRow>
      <ToolRow>
        <Tool $w={28} aria-label="加粗"><Icon w={10} h={12} sw={1.800}><path d="M1.500 1.500h3.800a2.200 2.200 0 0 1 0 4.500H1.500zM1.500 6h4.300a2.300 2.300 0 0 1 0 4.600H1.500z" /></Icon></Tool>
        <Tool $w={28} aria-label="斜体"><Icon w={10} h={12} sw={1.500}><path d="M3.500 1.500h5.500M1 10.500h5.500M6.500 1.500l-3 9" /></Icon></Tool>
        <Tool $w={28} aria-label="下划线"><Icon w={10} h={12} sw={1.500}><path d="M2 1v4.500a3 3 0 0 0 6 0V1M.5 11h9" /></Icon></Tool>
        <Tool $w={28} aria-label="删除线"><Icon w={12} h={12} sw={1.400}><path d="M9 3.500C8.500.500 3 .800 3 3.300 3 4.500 4 5.500 6 6M3 8.500c.500 3 6 2.800 6 .300 0-1-.500-1.800-1.500-2.300M0 6h12" /></Icon></Tool>
        <Tool $w={28} aria-label="上标"><Icon w={14} h={12} sw={1.500}><path d="M1 3l7 8M8 3l-7 8" /><path d="M10 2.500c.300-1.500 3-1.300 2.600.300L10 5.500h3.500" strokeWidth="1" /></Icon></Tool>
        <Tool $w={28} aria-label="下标"><Icon w={14} h={12} sw={1.500}><path d="M1 1l7 8M8 1l-7 8" /><path d="M10 8.500c.300-1.500 3-1.300 2.600.300L10 11.500h3.500" strokeWidth="1" /></Icon></Tool>
        <Spacer $w={2} />
        <Tool $w={30} $muted aria-label="文字效果"><Icon w={12} h={12} sw={1.300}><path d="M1 3.500V1.500h9v2M5.500 1.500V9M4 9.200h3M1 11.500h2M4.500 11.500h2M8 11.500h2" /></Icon><Caret /></Tool>
        <Tool $w={30} aria-label="行距"><Icon w={15} h={12} sw={1.500}><path d="M5.500 2H15M5.500 6H15M5.500 10H15" /><path d="M2 1.500v9M.3 3L2 1l1.700 2M.3 9L2 11l1.700-2" strokeWidth="1.200" /></Icon><Caret /></Tool>
        <Tool $w={30} aria-label="项目符号"><Icon w={13} h={12} sw={1.500}><path d="M0 2h1.800M4 2h8.500M0 6h1.800M4 6h8.500M0 10h1.800M4 10h8.500" /></Icon><Caret /></Tool>
        <Tool $w={30} aria-label="突出显示">
          <Icon w={14} h={14} sw={1.300}><path d="M1.200 4.500c1-1.200 4.300-1.200 4.300 1V10M5.500 6.500c-3 0-4.700.500-4.700 2 0 2 4 1.800 4.700-.300M8 .500V10M8 6c.500-2.300 4.800-2.300 4.800 1 0 3.500-4.300 3.500-4.800 1" /><path d="M0 13h14" stroke="#111" strokeWidth="2" /></Icon><Caret />
        </Tool>
        <Tool $w={30} aria-label="字体颜色">
          <Icon w={14} h={14} sw={1.300}><path d="M2.500 10.500L7 .8l4.500 9.700M4 7.500h6" /><path d="M0 13h14" stroke="#111" strokeWidth="2" /></Icon><Caret />
        </Tool>
      </ToolRow>
    </ToolStack>
    <Divider $soft />
    <BigGroup $pad="0 7px">{insertTools.map((t) => <BigTool key={t.label} {...t} />)}</BigGroup>
    <Divider />
    <BigGroup $pad="0 6px 0 7px">{arrangeTools.map((t) => <BigTool key={t.label} {...t} />)}</BigGroup>
    <Divider $soft />
    <BigGroup $pad="0 0 0 1px"><BigTool label="样式" icon={<Bucket size={13} />} /></BigGroup>
    <Divider $soft />
    <BigGroup $pad="0 0 0 2px">
      <BigTool label="工具" icon={<Icon w={16} sw={1.5}><path d="M7 14H1.500V2h12.500v5M4 5.500h7.500M4 8.500h3.500M4 11h2.500" /><circle cx="10.500" cy="10" r="2.500" /><path d="M12.500 12l2.500 2.500" /></Icon>} />
    </BigGroup>
    <Divider />
  </Ribbon>
);

const Section = ({ title, children }: { title: string; children?: React.ReactNode }) => (
  <SectionHead>
    <svg width="7" height="6" viewBox="0 0 7 6" fill="currentColor" aria-hidden="true"><path d="M0 .5h7L3.500 5.500z" /></svg>
    <SectionTitle>{title}</SectionTitle>
    <SectionTools>
      {children}
      <CloseX />
    </SectionTools>
  </SectionHead>
);

const LibraryPanel = () => (
  <Library>
    <LibraryHead>
      <LibraryTitle>符号库</LibraryTitle>
      <Icon w={12} h={10} sw={1}><path d="M5.500.500L1.500 5l4 4.500M10.500.500l-4 4.500 4 4.500" stroke="#777" /></Icon>
    </LibraryHead>
    <SearchRow>
      <Icon w={13} h={12} sw={1.200}><path d="M2.500 1.500h8M1.500 3.500h10" /><path d="M.5 5.500h12v6H.5z" fill="currentColor" /><path d="M4 7.500h5" stroke="#fff" /></Icon>
      <Spacer $w={1} />
      <Caret />
      <SearchBox>
        <SearchInput type="text" placeholder="搜索符号" aria-label="搜索符号" />
        <Icon w={14} sw={1.700}><circle cx="6" cy="6" r="4.500" /><path d="M9.500 9.500L13 13" /></Icon>
      </SearchBox>
      <Steppers>
        <Stepper aria-label="上一个"><Icon w={7} h={4} sw={1}><path d="M.5 3.500l3-3 3 3" /></Icon></Stepper>
        <Stepper aria-label="下一个"><Icon w={7} h={4} sw={1}><path d="M.5 .5l3 3 3-3" /></Icon></Stepper>
      </Steppers>
    </SearchRow>
    <LibraryScroll>
      <LibraryList>
        <Section title="我的库">
          <Icon w={9} sw={1}><path d="M8.500 2.500v-2h-8v8h8v-2M8.500 4.500h-5M5 2.500l-2 2 2 2" /></Icon>
          <Icon w={9} sw={1.200}><path d="M4.500 0v9M0 4.500h9" /></Icon>
        </Section>
        <EmptyHint>
          <svg aria-hidden="true"><rect x="1" y="1" width="136" height="36" rx="3" fill="none" stroke="#c4c4c4" strokeWidth="1.500" strokeDasharray="7 4" /></svg>
          选中任意符号，点击上方加号添加到此库。
        </EmptyHint>
        <Section title="表单" />
        <Thumbs>{formThumbs.map((t, i) => <Art key={i}>{t}</Art>)}</Thumbs>
        <Section title="背景" />
        <Thumbs>{backgroundThumbs.map((t, i) => <Art key={i}>{t}</Art>)}</Thumbs>
      </LibraryList>
      <Track><Thumb $len={175} $tone="#d8d8d8" /></Track>
    </LibraryScroll>
  </Library>
);

const Canvas = () => (
  <Workspace>
    <DocTabs>
      <DocTab>
        <svg width="12" height="13" viewBox="0 0 12 13" aria-hidden="true">
          <path d="M1 1h7l3 3v8H1z" fill="#0a80f8" />
          <path d="M3 4.500h3.500c3 0 3 4.500 0 4.500H3M3 6.700h3.500" fill="none" stroke="#fff" strokeWidth="1.100" />
          <circle cx="9.800" cy="10.800" r="2.200" fill="#f01020" />
        </svg>
        <DocName>资产负债表模板</DocName>
        <CloseX />
      </DocTab>
    </DocTabs>
    <Stage>
      <Corner />
      <RulerX>{steps(30, 18).map((n) => <MarkX key={n}>{n}</MarkX>)}</RulerX>
      <Corner />
      <RulerY>{steps(100, 17).map((n) => <MarkY key={n}>{n}</MarkY>)}</RulerY>
      <Page>
        <Sheet>
          <colgroup>
            {[168, 46, 64, 58, 142, 49, 53].map((w, i) => <col key={i} width={w} />)}
            <col />
          </colgroup>
          <tbody>
            {sheetRows.map((r, i) => (
              <tr key={i}>
                <Cell $pink={r.aSum} $big={r.aSum} $left={r.aLeft ? 51 : 0} $indent={r.aSum ? 6 : 0}>{r.a}</Cell>
                <Cell $pink={r.aSum} $big={r.aSum}>{r.an}</Cell>
                <Cell $pink={r.aSum} />
                <Cell $pink={r.aSum} />
                <Cell $pink={r.eSum} $big={r.eSum} $left={r.eLeft} $indent={r.eSum ? 14 : 8}>{r.e}</Cell>
                <Cell $pink={r.eSum} $big={r.eSum}>{r.en}</Cell>
                <Cell $pink={r.eSum} />
                <Cell $pink={r.eSum} />
              </tr>
            ))}
          </tbody>
        </Sheet>
      </Page>
      <TrackY><Thumb $len={205} $offset={154} /></TrackY>
      <TrackX><Thumb $wide $len={206} $offset={184} /></TrackX>
      <Corner />
    </Stage>
    <PaletteRow>
      <Bucket size={11} />
      <Swatches>{swatches.map((c) => <Swatch key={c} style={{ backgroundColor: c }} />)}</Swatches>
    </PaletteRow>
  </Workspace>
);

const SideRail = () => (
  <Rail>
    <RailToggle aria-label="折叠面板">
      <Icon w={12} h={10} sw={1}><path d="M1.500.500l4 4.500-4 4.500M6.500.500l4 4.500-4 4.500" /></Icon>
    </RailToggle>
    {railIcons.map(([name, icon]) => (
      <RailButton key={name} $active={name === '表格'} aria-label={name}>{icon}</RailButton>
    ))}
  </Rail>
);

const TableData = () => (
  <DataPanel>
    <PanelTabs>
      <PanelTab>表格属性</PanelTab>
      <PanelTab $active>表格数据</PanelTab>
    </PanelTabs>
    <PanelActions>
      <ActionButton>导入</ActionButton>
      <ActionButton>导出</ActionButton>
    </PanelActions>
    <GridBox>
      <GridView>
        <DataGrid>
          <colgroup>
            <col width={40} />
            {[...'ABCDEF'].map((c) => <col key={c} width={65} />)}
          </colgroup>
          <thead>
            <tr>
              <ColHead />
              {[...'ABCDEF'].map((c) => <ColHead key={c} scope="col">{c}</ColHead>)}
            </tr>
          </thead>
          <tbody>
            {gridRows.map(([a, ai, b, c, d, e, ei], i) => (
              <tr key={i}>
                <RowHead scope="row">{i + 1}</RowHead>
                <DataCell $indent={ai} $left={ai < 0}>{a}</DataCell>
                <DataCell>{b}</DataCell>
                <DataCell>{c}</DataCell>
                <DataCell>{d}</DataCell>
                <DataCell $indent={ei} $left={ei < 0}>{e}</DataCell>
                <DataCell />
              </tr>
            ))}
          </tbody>
        </DataGrid>
      </GridView>
      <Track><Thumb $len={209} $tone="#d2d2d2" /></Track>
      <GridTrackX><Thumb $wide $len={131} $tone="#d2d2d2" /></GridTrackX>
    </GridBox>
  </DataPanel>
);

const StatusBar = () => (
  <Status>
    <StatusGroup>
      <Icon w={18} h={12} sw={1.500}><path d="M1 1.500v9M17 1.500v9M4.500 2h9v8h-9z" /></Icon>
      <PageSelect>
        <Spacer $w={11} />
        <Select aria-label="页面"><option>页-1</option></Select>
        <Caret size={6} />
      </PageSelect>
      <PageTab>页-1</PageTab>
      <StatusButton $w={20} aria-label="添加页面"><Icon w={9} sw={1.500}><path d="M4.500 .5v8M.5 4.500h8" /></Icon></StatusButton>
    </StatusGroup>
    <StatusGroup>
      <ShapeId>形状 ID：101</ShapeId>
      <StatusButton aria-label="播放">
        <Icon w={14} sw={1.500}><circle cx="7" cy="7" r="6" /><path d="M5.500 4.500v5L9.500 7z" fill="currentColor" strokeWidth=".5" /></Icon>
      </StatusButton>
      <Spacer $w={6} />
      <StatusButton $w={12} aria-label="缩小"><Icon w={9} sw={1.800}><path d="M.5 4.500h8" /></Icon></StatusButton>
      <Zoom type="range" min={0} max={100} defaultValue={23} aria-label="缩放" />
      <StatusButton $w={12} aria-label="放大"><Icon w={9} sw={1.800}><path d="M4.500 .5v8M.5 4.500h8" /></Icon></StatusButton>
      <ZoomValue>100%<Caret /></ZoomValue>
      <StatusButton aria-label="全屏"><Icon w={13} sw={1.800}><path d="M1 4.500V1h3.500M8.500 1H12v3.500M12 8.500V12H8.500M4.500 12H1V8.500" /></Icon></StatusButton>
      <Spacer $w={5} />
      <StatusButton aria-label="适应宽度"><Icon w={13} sw={1.500}><path d="M1 1h11v11H1z" /><path d="M3 6.500h7M4.800 4.800L3 6.500l1.800 1.700M8.200 4.800L10 6.500 8.200 8.200" strokeWidth="1.100" /></Icon></StatusButton>
    </StatusGroup>
  </Status>
);

export default function App() {
  return (
    <>
      <Global />
      <Frame>
        <TopBar />
        <RibbonBar />
        <Body>
          <LibraryPanel />
          <Canvas />
          <SideRail />
          <TableData />
        </Body>
        <StatusBar />
      </Frame>
    </>
  );
}
